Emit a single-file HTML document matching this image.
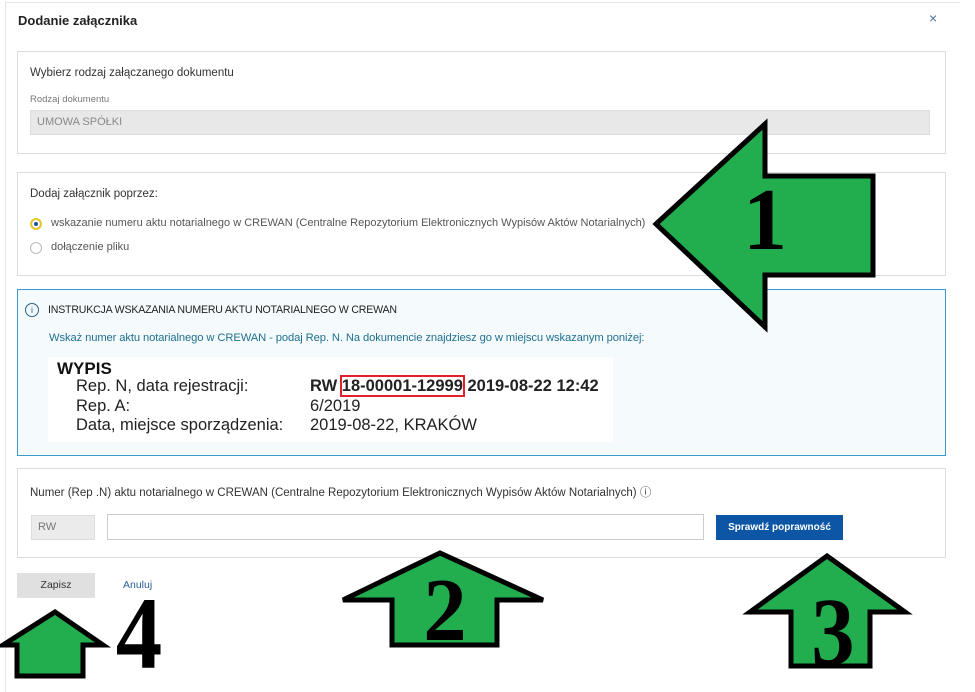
<!DOCTYPE html>
<html><head><meta charset="utf-8"><style>
*{box-sizing:border-box;margin:0;padding:0}
body{width:975px;height:684px;background:#fff;font-family:"Liberation Sans","DejaVu Sans",sans-serif;position:relative;overflow:hidden;color:#333}
.dlg{position:absolute;left:5px;top:2px;width:955px;height:690px;background:#fff;border-left:1px solid #e6e6e6;border-top:1px solid #e8e8e8}
.abs{position:absolute}
.panel{position:absolute;left:17px;width:929px;border:1px solid #dcdcdc;background:#fff}
.t{position:absolute;white-space:nowrap}
</style></head><body>
<div class="dlg"></div>
<div class="t" style="left:18px;top:13px;font-size:13px;font-weight:bold;color:#222">Dodanie załącznika</div>
<div class="t" style="left:929px;top:10px;font-size:14px;color:#4a6d9a">×</div>

<div class="panel" style="top:51px;height:103px">
 <div class="t" style="left:12px;top:15px;font-size:11.5px;color:#333">Wybierz rodzaj załączanego dokumentu</div>
 <div class="t" style="left:12px;top:42px;font-size:9.5px;color:#777">Rodzaj dokumentu</div>
 <div class="abs" style="left:12px;top:58px;width:900px;height:25px;background:#e8e8e8;border:1px solid #ddd"></div>
 <div class="t" style="left:19px;top:64px;font-size:11px;color:#888">UMOWA SPÓŁKI</div>
</div>

<div class="panel" style="top:172px;height:104px">
 <div class="t" style="left:12px;top:15px;font-size:11.5px;color:#333">Dodaj załącznik poprzez:</div>
 <div class="abs" style="left:12px;top:45px;width:12px;height:12px;border-radius:50%;border:2px solid #e8c830;background:#1a4f9c;box-shadow:inset 0 0 0 2px #fff"></div>
 <div class="t" style="left:33px;top:44px;font-size:11px;color:#555">wskazanie numeru aktu notarialnego w CREWAN (Centralne Repozytorium Elektronicznych Wypisów Aktów Notarialnych)</div>
 <div class="abs" style="left:12px;top:69px;width:12px;height:12px;border-radius:50%;border:1px solid #bbb"></div>
 <div class="t" style="left:33px;top:68px;font-size:11px;color:#555">dołączenie pliku</div>
</div>

<div class="panel" style="top:289px;height:167px;border-color:#3b9ccc;background:#f5fbfd">
 <div class="abs" style="left:7px;top:13px;width:14px;height:14px;border-radius:50%;border:1px solid #2a5f8a;font-size:9px;text-align:center;line-height:12px;color:#2a5f8a">i</div>
 <div class="t" style="left:30px;top:14px;font-size:10.6px;color:#222;letter-spacing:-0.2px">INSTRUKCJA WSKAZANIA NUMERU AKTU NOTARIALNEGO W CREWAN</div>
 <div class="t" style="left:31px;top:42px;font-size:11.2px;color:#1f6f8f;letter-spacing:-0.1px">Wskaż numer aktu notarialnego w CREWAN - podaj Rep. N. Na dokumencie znajdziesz go w miejscu wskazanym poniżej:</div>
 <div class="abs" style="left:30px;top:67px;width:565px;height:85px;background:#fff"></div>
 <div class="t" style="left:39px;top:69px;font-size:17px;font-weight:bold;color:#111">WYPIS</div>
 <div class="t" style="left:58px;top:87px;font-size:16.5px;color:#222;line-height:19.5px">Rep. N, data rejestracji:<br>Rep. A:<br>Data, miejsce sporządzenia:</div>
 <div class="t" style="left:292px;top:87px;font-size:16.5px;color:#222;line-height:19.5px"><b>RW <span style="outline:2px solid #e0202a;outline-offset:0">18-00001-12999</span>&nbsp;2019-08-22 12:42</b><br>6/2019<br>2019-08-22, KRAKÓW</div>
</div>

<div class="panel" style="top:468px;height:90px">
 <div class="t" style="left:12px;top:15px;font-size:11.5px;color:#333">Numer (Rep .N) aktu notarialnego w CREWAN (Centralne Repozytorium Elektronicznych Wypisów Aktów Notarialnych) ⓘ</div>
 <div class="abs" style="left:13px;top:46px;width:64px;height:25px;background:#ebebeb;border:1px solid #ddd"></div>
 <div class="t" style="left:20px;top:52px;font-size:11px;color:#777">RW</div>
 <div class="abs" style="left:89px;top:45px;width:597px;height:26px;border:1px solid #ccc"></div>
 <div class="abs" style="left:698px;top:46px;width:127px;height:25px;background:#0d56a6;color:#fff;font-size:10px;font-weight:bold;text-align:center;line-height:25px">Sprawdź poprawność</div>
</div>

<div class="abs" style="left:17px;top:573px;width:78px;height:25px;background:#e0e0e0;font-size:10.5px;text-align:center;line-height:25px;color:#333">Zapisz</div>
<div class="t" style="left:123px;top:579px;font-size:10.5px;color:#2a5f9a">Anuluj</div>

<svg class="abs" style="left:0;top:0" width="975" height="684" viewBox="0 0 975 684">
 <g fill="#22ad4f" stroke="#000" stroke-width="5" stroke-linejoin="miter">
  <polygon points="656,224 765,124 765,176 873,176 873,275 765,275 765,327"/>
  <polygon points="440,553 343,600 392,600 392,645 497,645 497,600 543,600"/>
  <polygon points="827,556 750,612 791,612 791,666 870,666 870,612 905,612"/>
  <polygon points="55,612 3,645 17,645 17,676 83,676 83,645 103,645"/>
 </g>
 <g font-family="Liberation Serif,serif" font-weight="bold" fill="#000" text-anchor="middle">
  <text x="0" y="0" font-size="88" transform="translate(765 249)">1</text>
  <text x="0" y="0" font-size="62" transform="translate(445 640) scale(1.4,1.45)">2</text>
  <text x="0" y="0" font-size="62" transform="translate(833 664) scale(1.4,1.55)">3</text>
  <text x="0" y="0" font-size="62" transform="translate(139 668) scale(1.5,1.65)">4</text>
 </g>
</svg>
</body></html>
